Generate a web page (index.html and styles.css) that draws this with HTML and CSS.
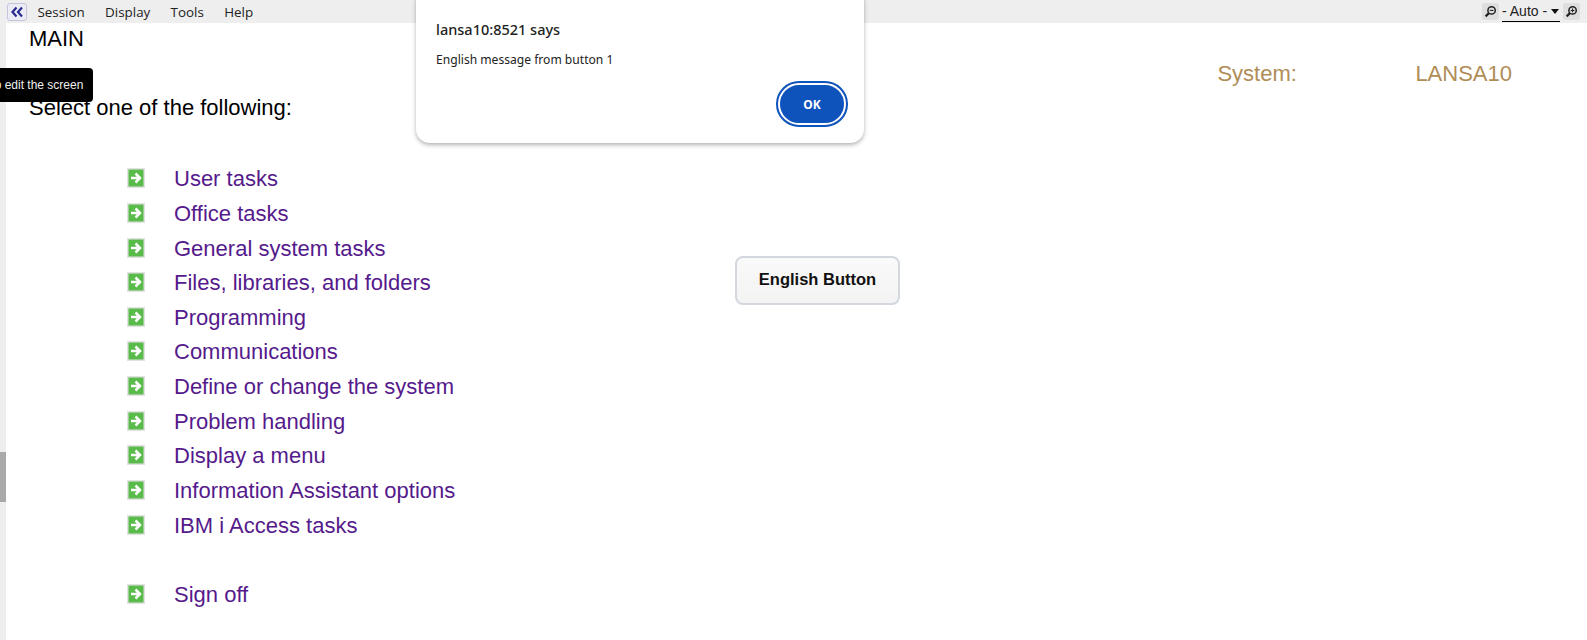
FILE: index.html
```html
<!DOCTYPE html>
<html lang="en">
<head>
<meta charset="utf-8">
<title>MAIN</title>
<link rel="stylesheet" href="styles.css">
</head>
<body>
<div class="app">
  <aside class="rail"><div class="rail-thumb"></div></aside>
  <div class="workspace">
    <header class="topbar">
      <button class="collapse" aria-label="Collapse">
        <svg width="14" height="12" viewBox="0 0 14 12"><path d="M6.500 1.500 2.500 6l4 4.500M12 1.500 8 6l4 4.500" fill="none" stroke="#2a2a90" stroke-width="2.200"/></svg>
      </button>
      <nav class="menu">
        <span>Session</span><span>Display</span><span>Tools</span><span>Help</span>
      </nav>
      <div class="zoom">
        <span class="zoom-btn"><svg width="13" height="13" viewBox="0 0 12 12"><circle cx="7" cy="5" r="3.400" fill="none" stroke="#222" stroke-width="1.400"/><path d="M4.500 7.500 1.500 10.500" stroke="#222" stroke-width="2"/><path d="M5.300 5h3.400" stroke="#222"/></svg></span>
        <span class="zoom-select">- Auto - <i class="caret"></i></span>
        <span class="zoom-btn"><svg width="13" height="13" viewBox="0 0 12 12"><circle cx="7" cy="5" r="3.400" fill="none" stroke="#222" stroke-width="1.400"/><path d="M4.500 7.500 1.500 10.500" stroke="#222" stroke-width="2"/><path d="M5.300 5h3.400M7 3.300v3.400" stroke="#222"/></svg></span>
      </div>
    </header>
    <main class="screen">
      <section class="menu-screen">
        <h1 class="title">MAIN</h1>
        <p class="prompt">Select one of the following:</p>
        <ul class="options">
          <li class="option"><svg class="arrow" viewBox="0 0 18 20"><use href="#go"/></svg><a>User tasks</a></li>
          <li class="option"><svg class="arrow" viewBox="0 0 18 20"><use href="#go"/></svg><a>Office tasks</a></li>
          <li class="option"><svg class="arrow" viewBox="0 0 18 20"><use href="#go"/></svg><a>General system tasks</a></li>
          <li class="option"><svg class="arrow" viewBox="0 0 18 20"><use href="#go"/></svg><a>Files, libraries, and folders</a></li>
          <li class="option"><svg class="arrow" viewBox="0 0 18 20"><use href="#go"/></svg><a>Programming</a></li>
          <li class="option"><svg class="arrow" viewBox="0 0 18 20"><use href="#go"/></svg><a>Communications</a></li>
          <li class="option"><svg class="arrow" viewBox="0 0 18 20"><use href="#go"/></svg><a>Define or change the system</a></li>
          <li class="option"><svg class="arrow" viewBox="0 0 18 20"><use href="#go"/></svg><a>Problem handling</a></li>
          <li class="option"><svg class="arrow" viewBox="0 0 18 20"><use href="#go"/></svg><a>Display a menu</a></li>
          <li class="option"><svg class="arrow" viewBox="0 0 18 20"><use href="#go"/></svg><a>Information Assistant options</a></li>
          <li class="option"><svg class="arrow" viewBox="0 0 18 20"><use href="#go"/></svg><a>IBM i Access tasks</a></li>
          <li class="option-spacer"></li>
          <li class="option"><svg class="arrow" viewBox="0 0 18 20"><use href="#go"/></svg><a>Sign off</a></li>
        </ul>
      </section>
      <button class="english">English Button</button>
      <div class="system"><span>System:</span><span>LANSA10</span></div>
    </main>
  </div>
</div>

<div class="tooltip">Click to edit the screen</div>

<div class="dialog">
  <div class="dialog-title">lansa10:8521 says</div>
  <div class="dialog-msg">English message from button 1</div>
  <div class="dialog-actions"><button class="ok">OK</button></div>
</div>

<svg class="defs" width="0" height="0">
  <symbol id="go" viewBox="0 0 18 20">
    <rect width="18" height="20" fill="#e2e2e2"/>
    <rect x="1.500" y="1.500" width="15" height="17" fill="#58bb4a"/>
    <path d="M4 10h8M8.500 5.500l4.500 4.500-4.500 4.500" fill="none" stroke="#fff" stroke-width="2.500"/>
  </symbol>
</svg>
</body>
</html>
```
FILE: styles.css
```css
* { box-sizing: border-box; }
html, body { margin: 0; height: 100%; overflow: hidden; background: #fff; }
body { font-family: "Liberation Sans", Arial, sans-serif; color: #000; }

.app { display: flex; height: 640px; }
.rail { width: 6px; flex: none; background: #eeeeee; padding-top: 452px; }
.rail-thumb { height: 50px; background: #a9a9a9; }
.workspace { flex: 1; display: flex; flex-direction: column; min-width: 0; }

.topbar { height: 23px; flex: none; background: #eeeeee; display: flex; align-items: center; padding: 0 7px 0 1px; }
.collapse { width: 20px; height: 18px; padding: 0; margin-top: 1px; display: flex; align-items: center; justify-content: center; background: #ececf6; border: 1px solid #c4c4da; border-radius: 3px; }
.menu { display: flex; gap: 20.300px; margin-left: 10.500px; font-family: "Open Sans", sans-serif; font-size: 13.400px; color: #222; }
.zoom { margin-left: auto; display: flex; align-items: center; gap: 3px; }
.zoom-btn { width: 17px; height: 17px; background: #dedede; border-radius: 3px; display: flex; align-items: center; justify-content: center; }
.zoom-select { font-size: 14px; color: #222; height: 20px; line-height: 19px; border-bottom: 1px solid #000; width: 58px; white-space: nowrap; }
.caret { display: inline-block; border: 4px solid transparent; border-top: 5px solid #111; border-bottom: 0; vertical-align: 2px; }

.screen { flex: 1; display: grid; grid-template-columns: 729px auto 1fr; align-items: start; }
.menu-screen { padding-left: 23px; }
.title { margin: 3px 0 0; font-size: 22px; font-weight: 400; line-height: 26px; }
.prompt { margin: 43px 0 0; font-size: 22px; line-height: 26px; }
.options { list-style: none; margin: 41px 0 0; padding: 0 0 0 98px; display: grid; grid-auto-rows: 34.640px; }
.option { display: flex; align-items: center; gap: 29px; font-size: 22px; color: #551a8b; white-space: nowrap; }
.arrow { width: 18px; height: 20px; flex: none; margin-top: -2px; }

.english { margin-top: 233px; width: 165px; height: 49px; background: linear-gradient(#fafafa, #f3f3f3); border: 2px solid #d3d8de; border-radius: 8px; font: 700 16.500px "Liberation Sans", Arial, sans-serif; color: #111; padding: 0 0 2px; }
.system { justify-self: end; display: flex; gap: 118.500px; margin: 38px 75px 0 0; font-size: 22px; color: #b08d57; }

.tooltip { position: absolute; left: -52px; top: 68px; width: 145px; height: 34px; background: #000; color: #eee; border-radius: 4px; font-size: 12px; line-height: 34px; padding-left: 14px; white-space: nowrap; }
.defs { position: absolute; }

.dialog { position: absolute; left: 416px; top: -12px; width: 448px; height: 155px; background: #fff; border-radius: 14px; box-shadow: 0 2px 4px rgba(0,0,0,.3); padding: 31px 20px 0; font-family: "Noto Sans", "Open Sans", sans-serif; color: #222; }
.dialog-title { font-size: 14.500px; font-weight: 500; line-height: 20px; }
.dialog-msg { margin-top: 12px; font-size: 12.100px; line-height: 18px; }
.dialog-actions { display: flex; justify-content: flex-end; margin: 14px -2px 0 0; }
.ok { width: 68px; height: 42px; background: #0e52bb; color: #fff; border: 2px solid #fff; outline: 2px solid #0e52bb; border-radius: 21px; font: 700 12px "Noto Sans", sans-serif; padding: 0; }
```
